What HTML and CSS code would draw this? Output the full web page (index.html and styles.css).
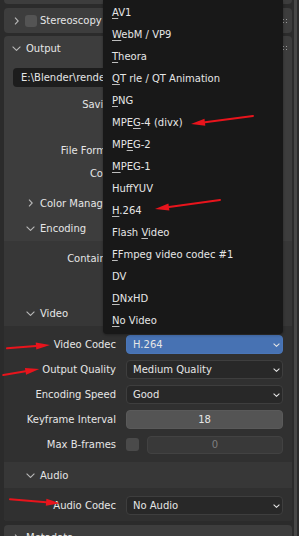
FILE: index.html
```html
<!DOCTYPE html>
<html>
<head>
<meta charset="utf-8">
<link rel="stylesheet" href="styles.css">
</head>
<body>
<div class="editor">
  <div class="panel panel-prev"></div>

  <div class="panel panel-stereo">
    <div class="hdr hdr-top">
      <span class="slot"><svg class="chev-r" width="5" height="8" viewBox="0 0 5 8"><polyline points="1,0.6 4.2,4 1,7.4"/></svg></span>
      <span class="hdr-check"></span>
      <span class="hdr-title">Stereoscopy</span>
      <span class="grip"><i></i><i></i><i></i><i></i><i></i><i></i><i></i><i></i></span>
    </div>
  </div>

  <div class="panel panel-output">
    <div class="hdr hdr-top hdr-output">
      <span class="slot"><svg class="chev-d" width="9" height="5" viewBox="0 0 9 5"><polyline points="0.6,0.6 4.5,4.4 8.4,0.6"/></svg></span>
      <span class="hdr-title title-top">Output</span>
      <span class="grip"><i></i><i></i><i></i><i></i><i></i><i></i><i></i><i></i></span>
    </div>
    <div class="rows out-rows">
      <div class="pathfield">E:\Blender\render\</div>
      <div class="row"><span class="lbl">Saving</span><span class="chk-line"><span class="chk"></span>File Extensions</span></div>
      <div class="row"><span class="lbl"></span><span class="chk-line"><span class="chk"></span>Cache Result</span></div>
      <div class="row"><span class="lbl">File Format</span><span class="field dd"><span>FFmpeg Video</span></span></div>
      <div class="row"><span class="lbl">Color</span><span class="field dd"><span>BW</span></span></div>
    </div>

    <div class="hdr hdr-sub">
      <span class="slot"><svg class="chev-r" width="5" height="8" viewBox="0 0 5 8"><polyline points="1,0.6 4.2,4 1,7.4"/></svg></span>
      <span class="hdr-title">Color Management</span>
    </div>
    <div class="hdr hdr-sub">
      <span class="slot"><svg class="chev-d" width="9" height="5" viewBox="0 0 9 5"><polyline points="0.6,0.6 4.5,4.4 8.4,0.6"/></svg></span>
      <span class="hdr-title">Encoding</span>
    </div>

    <div class="sub-body">
      <div class="rows enc-rows">
        <div class="row"><span class="lbl">Container</span><span class="field dd"><span>MPEG-4</span></span></div>
        <div class="row"><span class="lbl"></span><span class="chk-line"><span class="chk"></span>Autosplit Output</span></div>
      </div>

      <div class="hdr hdr-sub hdr-video">
        <span class="slot"><svg class="chev-d" width="9" height="5" viewBox="0 0 9 5"><polyline points="0.6,0.6 4.5,4.4 8.4,0.6"/></svg></span>
        <span class="hdr-title">Video</span>
      </div>
      <div class="rows sub2-body video-rows">
        <div class="row"><span class="lbl">Video Codec</span><span class="field dd sel"><span>H.264</span><svg class="dd-arrow" width="7" height="4" viewBox="0 0 7 4"><polyline points="0.6,0.6 3.5,3.3 6.4,0.6"/></svg></span></div>
        <div class="row"><span class="lbl">Output Quality</span><span class="field dd"><span>Medium Quality</span><svg class="dd-arrow" width="7" height="4" viewBox="0 0 7 4"><polyline points="0.6,0.6 3.5,3.3 6.4,0.6"/></svg></span></div>
        <div class="row"><span class="lbl">Encoding Speed</span><span class="field dd"><span>Good</span><svg class="dd-arrow" width="7" height="4" viewBox="0 0 7 4"><polyline points="0.6,0.6 3.5,3.3 6.4,0.6"/></svg></span></div>
        <div class="row"><span class="lbl">Keyframe Interval</span><span class="field num">18</span></div>
        <div class="row"><span class="lbl">Max B-frames</span><span class="bframes"><span class="chk chk-b"></span><span class="field num num-off">0</span></span></div>
      </div>

      <div class="hdr hdr-sub hdr-audio">
        <span class="slot"><svg class="chev-d" width="9" height="5" viewBox="0 0 9 5"><polyline points="0.6,0.6 4.5,4.4 8.4,0.6"/></svg></span>
        <span class="hdr-title">Audio</span>
      </div>
      <div class="rows sub2-body audio-rows">
        <div class="row"><span class="lbl">Audio Codec</span><span class="field dd"><span>No Audio</span><svg class="dd-arrow" width="7" height="4" viewBox="0 0 7 4"><polyline points="0.6,0.6 3.5,3.3 6.4,0.6"/></svg></span></div>
      </div>
    </div>
  </div>

  <div class="panel panel-meta">
    <div class="hdr hdr-top">
      <span class="slot"><svg class="chev-r" width="5" height="8" viewBox="0 0 5 8"><polyline points="1,0.6 4.2,4 1,7.4"/></svg></span>
      <span class="hdr-title title-top">Metadata</span>
      <span class="grip"><i></i><i></i><i></i><i></i><i></i><i></i><i></i><i></i></span>
    </div>
  </div>
</div>
<div class="scrollbar"></div>

<div class="menu">
  <div class="item"><u>A</u>V1</div>
  <div class="item"><u>W</u>ebM / VP9</div>
  <div class="item"><u>T</u>heora</div>
  <div class="item"><u>Q</u>T rle / QT Animation</div>
  <div class="item"><u>P</u>NG</div>
  <div class="item">MPE<u>G</u>-4 (divx)</div>
  <div class="item">MP<u>E</u>G-2</div>
  <div class="item"><u>M</u>PEG-1</div>
  <div class="item">HuffYUV</div>
  <div class="item"><u>H</u>.264</div>
  <div class="item">Flash <u>V</u>ideo</div>
  <div class="item"><u>F</u>Fmpeg video codec #1</div>
  <div class="item">DV</div>
  <div class="item"><u>D</u>NxHD</div>
  <div class="item"><u>N</u>o Video</div>
</div>

<svg class="arrows" width="299" height="536" viewBox="0 0 299 536">
  <g stroke="#e8141c" stroke-width="2" stroke-linecap="round" fill="#e8141c">
    <line x1="253" y1="116" x2="205" y2="122.2"/>
    <polygon stroke="none" points="191,124 205.3,125.7 204.5,118.7"/>
    <line x1="220" y1="200" x2="169" y2="207.1"/>
    <polygon stroke="none" points="155,209 169.4,210.6 168.4,203.6"/>
    <line x1="7" y1="348.3" x2="36" y2="346.1"/>
    <polygon stroke="none" points="50,345 35.7,342.6 36.3,349.6"/>
    <line x1="3.3" y1="375" x2="25.5" y2="371.3"/>
    <polygon stroke="none" points="39.3,369 24.9,367.9 26.1,374.8"/>
    <line x1="10" y1="499.3" x2="46.1" y2="502.2"/>
    <polygon stroke="none" points="60,503.3 46.4,498.7 45.8,505.7"/>
  </g>
</svg>
</body>
</html>
```

FILE: styles.css
```css
* { box-sizing: border-box; }
html, body { margin: 0; padding: 0; }
body {
  width: 299px;
  height: 536px;
  overflow: hidden;
  background: #2b2b2b;
  font-family: "DejaVu Sans", sans-serif;
  font-size: 10px;
  color: #e6e6e6;
  display: flex;
  padding-left: 4px;
  position: relative;
}
.editor {
  width: 288px;
  display: flex;
  flex-direction: column;
  flex: none;
}
.scrollbar {
  width: 3px;
  margin-left: 2px;
  background: #474747;
  flex: none;
}
.panel {
  background: #3d3d3d;
  border-radius: 4px;
  overflow: hidden;
  flex: none;
}
.panel-prev { height: 4px; border-radius: 0 0 4px 4px; }
.panel-stereo { margin-top: 4px; }
.panel-output { margin-top: 3px; }
.panel-meta { margin-top: 4px; height: 40px; border-radius: 4px 4px 0 0; }

.hdr {
  height: 25px;
  display: flex;
  align-items: center;
  white-space: nowrap;
}
.hdr-top { padding-left: 8px; }
.hdr-output { height: 24px; }
.hdr-sub { padding-left: 22px; }
.hdr-video, .hdr-audio { height: 26px; }
.slot {
  width: 9px;
  display: flex;
  justify-content: center;
  align-items: center;
  flex: none;
}
.slot svg polyline, .dd-arrow polyline {
  fill: none;
  stroke: #b8b8b8;
  stroke-width: 1.1;
}
.dd-arrow polyline { stroke: #e6e6e6; }
.hdr-check {
  width: 12px;
  height: 12px;
  border-radius: 3px;
  background: #545454;
  margin-left: 4px;
  flex: none;
}
.hdr-title { margin-left: 3px; }
.hdr-sub .hdr-title, .title-top { margin-left: 5px; }
.grip {
  margin-left: auto;
  margin-right: 3px;
  width: 12px;
  display: grid;
  grid-template-columns: repeat(4, 3px);
  row-gap: 2px;
}
.grip i {
  display: block;
  width: 1px;
  height: 1px;
  background: #9a9a9a;
}

.rows {
  display: flex;
  flex-direction: column;
  padding: 0 9px;
}
.out-rows { padding-top: 7.5px; padding-bottom: 8px; gap: 4px; }
.pathfield {
  height: 19px;
  border-radius: 4px;
  background: #1d1d1d;
  padding-left: 8px;
  display: flex;
  align-items: center;
  margin-bottom: 4px;
  white-space: nowrap;
}
.sub-body { background: #373737; }
.enc-rows { padding-top: 8px; padding-bottom: 8.5px; gap: 5px; }
.sub2-body { background: #303030; }
.video-rows { padding-top: 9px; padding-bottom: 8px; gap: 6px; }
.audio-rows { padding-top: 8px; padding-bottom: 6px; }

.row {
  display: grid;
  grid-template-columns: 103px 1fr;
  column-gap: 10px;
  height: 19px;
  align-items: center;
}
.lbl {
  text-align: right;
  white-space: nowrap;
}
.field {
  height: 19px;
  border-radius: 4px;
  display: flex;
  align-items: center;
  white-space: nowrap;
}
.dd {
  background: #282828;
  border: 1px solid #3e3e3e;
  justify-content: space-between;
  padding: 0 2px 0 6px;
}
.dd.sel {
  background: #4772b3;
  border-color: #4a76b8;
}
.num {
  background: #545454;
  border: 1px solid #5a5a5a;
  justify-content: center;
}
.num-off {
  flex: 1;
  background: #393939;
  border-color: #424242;
  color: #7e7e7e;
  height: 18px;
}
.bframes {
  display: flex;
  align-items: center;
  gap: 8px;
}
.chk-line {
  display: flex;
  align-items: center;
  gap: 6px;
  white-space: nowrap;
}
.chk {
  width: 13px;
  height: 13px;
  border-radius: 3px;
  background: #545454;
  flex: none;
}
.chk-b { background: #4a4a4a; }

.menu {
  position: absolute;
  left: 103px;
  top: 0;
  width: 180px;
  height: 334px;
  background: #181818;
  border-radius: 0 0 4px 4px;
  padding: 2px 0;
  box-shadow: 0 1px 3px rgba(0,0,0,0.35);
}
.item {
  height: 22px;
  line-height: 22px;
  padding-left: 9px;
  color: #e6e6e6;
  white-space: nowrap;
}
.item u {
  text-decoration-thickness: 1px;
  text-underline-offset: 2px;
  text-decoration-color: #bdbdbd;
}
.arrows {
  position: absolute;
  left: 0;
  top: 0;
  pointer-events: none;
}
```
